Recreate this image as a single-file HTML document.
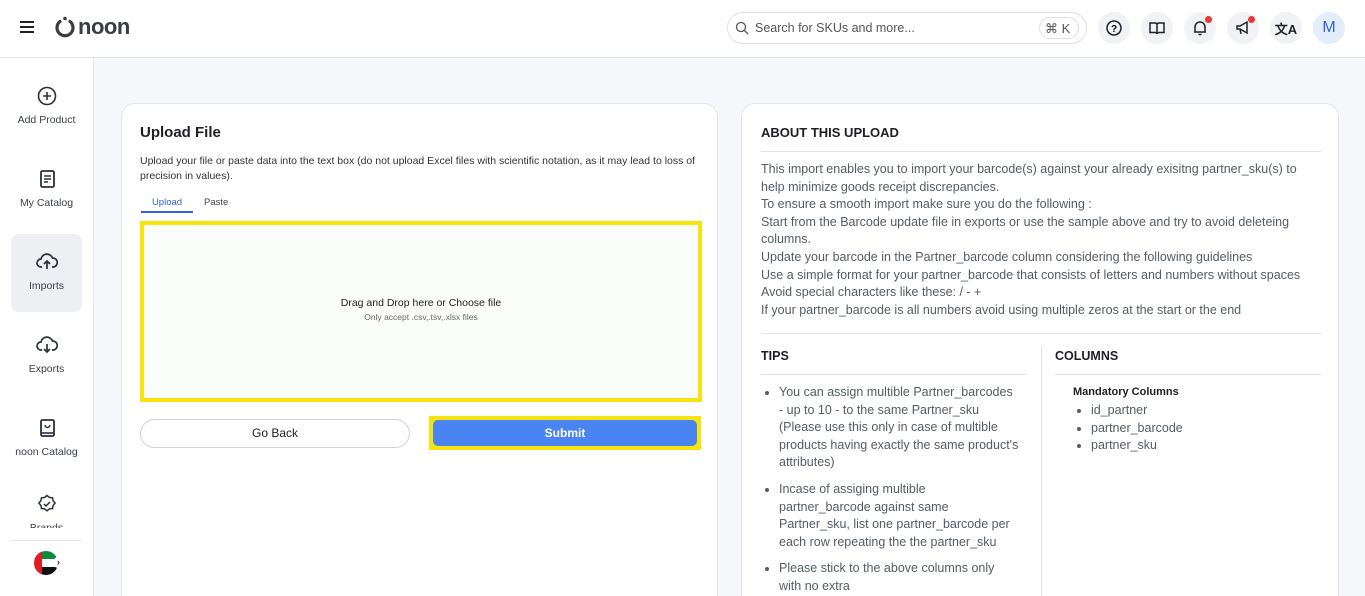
<!DOCTYPE html>
<html style="width:1365px;height:596px;overflow:hidden"><head><meta charset="utf-8"><style>
*{box-sizing:border-box;margin:0;padding:0}
body{width:1365px;height:596px;overflow:hidden;font-family:"Liberation Sans",sans-serif;background:#f6f7fa;position:relative;color:#222}
.a{position:absolute}
.hdr{left:0;top:0;width:1365px;height:58px;background:#fff;border-bottom:1px solid #e4e6ea}
.side{left:0;top:58px;width:94px;height:538px;background:#fff;border-right:1px solid #e4e6ea}
.nav{position:absolute;left:0;width:93px;text-align:center;font-size:10.5px;color:#3a3f4a}
.nav svg{display:block;margin:0 auto 8px}
.ib{width:32px;height:32px;border-radius:50%;background:#f1f2f5;top:12px;display:flex;align-items:center;justify-content:center}
.card{background:#fff;border:1px solid #e2e4e8;border-bottom:none;border-radius:14px 14px 0 0;overflow:hidden}
.rt{font-size:12.5px;line-height:17.6px;color:#555b66}
</style></head><body>
<div class="a hdr">
 <div class="a" style="left:20px;top:21px;width:14px;height:2px;background:#222;box-shadow:0 5px 0 #222,0 10px 0 #222"></div>
 <svg class="a" style="left:53px;top:15px" width="24" height="24" viewBox="0 0 24 24"><path d="M7 6.5A8 8 0 1 0 17 6.5" fill="none" stroke="#3a3d44" stroke-width="3.2" stroke-linecap="round"/><circle cx="12" cy="3.5" r="1.8" fill="#3a3d44"/></svg>
 <div class="a" style="left:78px;top:14px;font-size:22px;font-weight:bold;color:#3a3d44;letter-spacing:-0.5px">noon</div>
 <div class="a" style="left:727px;top:12px;width:360px;height:32px;border:1px solid #dcdfe4;border-radius:16px">
  <svg class="a" style="left:7px;top:8px" width="14" height="14" viewBox="0 0 14 14"><circle cx="6" cy="6" r="4.5" fill="none" stroke="#555" stroke-width="1.3"/><path d="M9.5 9.5L13 13" stroke="#555" stroke-width="1.3"/></svg>
  <div class="a" style="left:27px;top:8px;font-size:12.5px;color:#555">Search for SKUs and more...</div>
  <div class="a" style="left:311px;top:4px;width:40px;height:22px;border:1px solid #dcdfe4;border-radius:11px;font-size:13px;color:#555;padding:3px 0 0 5px">⌘ K</div>
 </div>
 <div class="a ib" style="left:1098px"><svg width="18" height="18" viewBox="0 0 18 18"><circle cx="9" cy="9" r="7" fill="none" stroke="#222" stroke-width="1.5"/><text x="9" y="13" font-size="10" text-anchor="middle" font-family="Liberation Sans" font-weight="bold">?</text></svg></div>
 <div class="a ib" style="left:1141px"><svg width="18" height="18" viewBox="0 0 18 18"><path d="M2 4h5q2 0 2 2v9q0-1.5-2-1.5H2zM16 4h-5q-2 0-2 2v9q0-1.5 2-1.5h5z" fill="none" stroke="#222" stroke-width="1.5"/></svg></div>
 <div class="a ib" style="left:1184px"><svg width="18" height="18" viewBox="0 0 18 18"><path d="M4 13V8a5 5 0 0 1 10 0v5zM3 13h12M7.5 15.5h3" fill="none" stroke="#222" stroke-width="1.5"/></svg></div>
 <div class="a" style="left:1205px;top:16px;width:7px;height:7px;border-radius:50%;background:#e53935"></div>
 <div class="a ib" style="left:1227px"><svg width="18" height="18" viewBox="0 0 18 18"><path d="M3 7h3l7-4v11l-7-4H3zM6 10l1 5" fill="none" stroke="#222" stroke-width="1.5"/></svg></div>
 <div class="a" style="left:1248px;top:16px;width:7px;height:7px;border-radius:50%;background:#e53935"></div>
 <div class="a ib" style="left:1270px;font-size:13px;font-weight:bold">文A</div>
 <div class="a ib" style="left:1313px;background:#e3edfc;color:#2f63d6;font-size:16px">M</div>
</div>
<div class="a side">
 <div class="nav" style="top:28px"><svg width="20" height="20" viewBox="0 0 20 20"><circle cx="10" cy="10" r="8.5" fill="none" stroke="#2b2f38" stroke-width="1.6"/><path d="M10 6v8M6 10h8" stroke="#2b2f38" stroke-width="1.6"/></svg>Add Product</div>
 <div class="nav" style="top:111px"><svg width="20" height="20" viewBox="0 0 20 20"><rect x="4" y="2" width="13" height="16" rx="1.5" fill="none" stroke="#2b2f38" stroke-width="1.8"/><path d="M7 7h7M7 10h7M7 13h4" stroke="#2b2f38" stroke-width="1.6"/></svg>My Catalog</div>
 <div class="a" style="left:11px;top:176px;width:71px;height:78px;background:#eeeff2;border-radius:8px"></div>
 <div class="nav" style="top:194px"><svg width="22" height="20" viewBox="0 0 22 20"><path d="M6 15H5a4 4 0 0 1 0-8 6 6 0 0 1 11.5-1A4.5 4.5 0 0 1 17 15h-1M11 17V9M8 12l3-3 3 3" fill="none" stroke="#2b2f38" stroke-width="1.7"/></svg>Imports</div>
 <div class="nav" style="top:277px"><svg width="22" height="20" viewBox="0 0 22 20"><path d="M6 15H5a4 4 0 0 1 0-8 6 6 0 0 1 11.5-1A4.5 4.5 0 0 1 17 15h-1M11 9v8M8 14l3 3 3-3" fill="none" stroke="#2b2f38" stroke-width="1.7"/></svg>Exports</div>
 <div class="nav" style="top:360px"><svg width="20" height="20" viewBox="0 0 20 20"><rect x="4" y="2" width="13" height="16" rx="1.5" fill="none" stroke="#2b2f38" stroke-width="1.8"/><path d="M8 7a2.5 2.5 0 1 0 5 0" fill="none" stroke="#2b2f38" stroke-width="1.4"/><path d="M4 15h13" stroke="#2b2f38" stroke-width="1.6"/></svg>noon Catalog</div>
 <div class="nav" style="top:436px;height:34px;overflow:hidden"><svg width="20" height="20" viewBox="0 0 20 20"><path d="M10 1.5l2.5 2 3 .3.6 3 2 2.2-2 2.5-.6 3-3 .3-2.5 2-2.5-2-3-.3-.6-3-2-2.5 2-2.2.6-3 3-.3z" fill="none" stroke="#2b2f38" stroke-width="1.5"/><path d="M7 10l2 2 4-4" fill="none" stroke="#2b2f38" stroke-width="1.5"/></svg>Brands</div>
 <div class="a" style="left:11px;top:482px;width:71px;height:1px;background:#e4e6ea"></div>
 <div class="a" style="left:34px;top:493px;width:24px;height:24px;border-radius:50%;overflow:hidden;background:linear-gradient(#0a8a3e 0 33%,#fff 33% 66%,#111 66%)"><div style="width:8px;height:24px;background:#e31b23"></div></div>
 <div class="a" style="left:53px;top:499px;width:11px;height:11px;border-radius:50%;background:#fff;font-size:9px;line-height:11px;text-align:center;font-weight:bold">›</div>
</div>
<div class="a card" style="left:121px;top:103px;width:597px;height:493px">
 <div class="a" style="left:18px;top:20px;font-size:15px;font-weight:bold;color:#1d1f24">Upload File</div>
 <div class="a" style="left:18px;top:50px;width:565px;font-size:10.5px;line-height:15px;color:#333">Upload your file or paste data into the text box (do not upload Excel files with scientific notation, as it may lead to loss of precision in values).</div>
 <div class="a" style="left:19px;top:93px;width:52px;text-align:center;font-size:9.5px;color:#2f63d6">Upload</div>
 <div class="a" style="left:19px;top:107px;width:52px;height:2px;background:#2f63d6"></div>
 <div class="a" style="left:82px;top:93px;font-size:9.5px;color:#444">Paste</div>
 <div class="a" style="left:18px;top:117px;width:562px;height:181px;border:4px solid #f7e40c;background:#fbfdfa;text-align:center">
  <div style="margin-top:72px;font-size:10.5px;color:#222">Drag and Drop here or Choose file</div>
  <div style="font-size:8.5px;color:#666;margin-top:3px">Only accept .csv,.tsv,.xlsx files</div>
 </div>
 <div class="a" style="left:18px;top:315px;width:270px;height:29px;border:1px solid #cfd2d8;border-radius:15px;text-align:center;font-size:12px;line-height:27px">Go Back</div>
 <div class="a" style="left:307px;top:312px;width:272px;height:34px;background:#f7e40c;padding:4px"><div style="height:26px;background:#4a84f2;border-radius:5px;color:#fff;text-align:center;font-size:12px;line-height:26px;font-weight:bold">Submit</div></div>
</div>
<div class="a card" style="left:741px;top:103px;width:598px;height:493px">
 <div class="a" style="left:19px;top:21px;font-size:13px;font-weight:bold;color:#1d1f24">ABOUT THIS UPLOAD</div>
 <div class="a" style="left:19px;top:47px;width:560px;height:1px;background:#e2e4e8"></div>
 <div class="a rt" style="left:19px;top:57px;width:555px">This import enables you to import your barcode(s) against your already exisitng partner_sku(s) to help minimize goods receipt discrepancies.<br>To ensure a smooth import make sure you do the following :<br>Start from the Barcode update file in exports or use the sample above and try to avoid deleteing columns.<br>Update your barcode in the Partner_barcode column considering the following guidelines<br>Use a simple format for your partner_barcode that consists of letters and numbers without spaces<br>Avoid special characters like these: / - +<br>If your partner_barcode is all numbers avoid using multiple zeros at the start or the end</div>
 <div class="a" style="left:19px;top:229px;width:560px;height:1px;background:#e2e4e8"></div>
 <div class="a" style="left:19px;top:245px;font-size:12.5px;font-weight:bold;color:#1d1f24">TIPS</div>
 <div class="a" style="left:19px;top:270px;width:266px;height:1px;background:#e2e4e8"></div>
 <div class="a" style="left:299px;top:242px;width:1px;height:300px;background:#e2e4e8"></div>
 <ul class="a rt" style="left:37px;top:280px;width:240px;padding-left:0;list-style:disc">
  <li>You can assign multible Partner_barcodes - up to 10 - to the same Partner_sku (Please use this only in case of multible products having exactly the same product's attributes)</li>
  <li style="margin-top:9px">Incase of assiging multible partner_barcode against same Partner_sku, list one partner_barcode per each row repeating the the partner_sku</li>
  <li style="margin-top:9px">Please stick to the above columns only with no extra</li>
 </ul>
 <div class="a" style="left:313px;top:245px;font-size:12.5px;font-weight:bold;color:#1d1f24">COLUMNS</div>
 <div class="a" style="left:313px;top:270px;width:266px;height:1px;background:#e2e4e8"></div>
 <div class="a" style="left:331px;top:282px;font-size:11px;font-weight:bold;color:#1d1f24">Mandatory Columns</div>
 <ul class="a rt" style="left:349px;top:298px">
  <li>id_partner</li><li>partner_barcode</li><li>partner_sku</li>
 </ul>
</div>
</body></html>
